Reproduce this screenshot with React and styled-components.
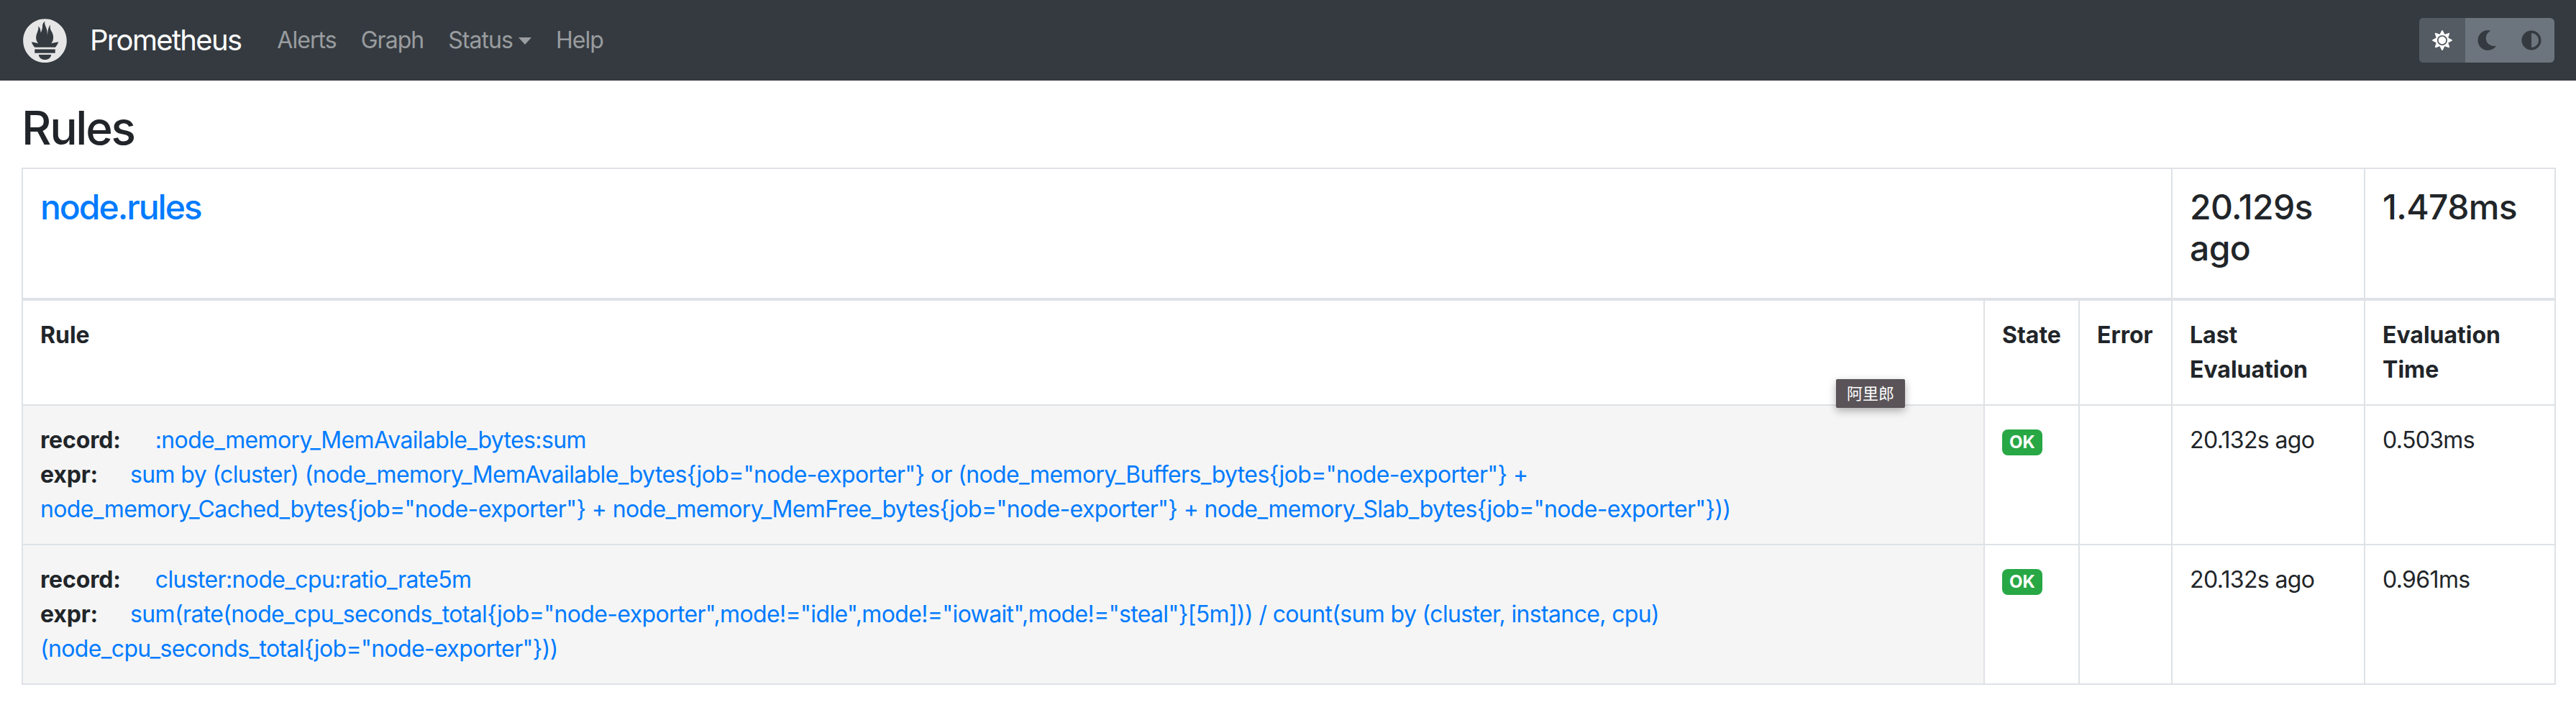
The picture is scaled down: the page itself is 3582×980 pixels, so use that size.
import React from 'react';
import styled, { createGlobalStyle } from 'styled-components';
import { FaSun, FaMoon, FaAdjust } from 'react-icons/fa';

const GlobalStyle = createGlobalStyle`
  html, body {
    margin: 0;
    background: #fff;
    color: #212529;
    font-family: Inter, "Noto Sans CJK SC", sans-serif;
    font-size: 32px;
    line-height: 1.5;
  }
`;

const Page = styled.div`
  position: relative;
  width: 3582px;
  min-height: 980px;
`;

const Navbar = styled.nav`
  display: flex;
  align-items: center;
  justify-content: space-between;
  height: 112px;
  padding: 0 30px 0 32px;
  box-sizing: border-box;
  background: #343a40;
`;

const NavLeft = styled.div`
  display: flex;
  align-items: center;
`;

const Logo = styled.svg`
  width: 61px;
  height: 61px;
  margin-right: 32px;
`;

const Brand = styled.a`
  color: #fff;
  font-size: 40px;
  letter-spacing: -0.042em;
  margin-right: 33px;
`;

const NavLink = styled.a`
  padding: 0 17px;
  color: rgba(255, 255, 255, 0.5);
  letter-spacing: -0.03em;
  white-space: nowrap;
`;

const Caret = styled.span`
  display: inline-block;
  margin-left: 8px;
  vertical-align: 5px;
  border-top: 10px solid;
  border-left: 9px solid transparent;
  border-right: 9px solid transparent;
`;

const ThemeToggle = styled.div`
  display: flex;
  height: 62px;
  border-radius: 6px;
  overflow: hidden;
  background: #6c757d;
`;

const ThemeButton = styled.div`
  display: flex;
  align-items: center;
  justify-content: center;
  width: ${p => p.$width}px;
  font-size: 28px;
  color: ${p => (p.$active ? '#fff' : '#343a40')};
  background: ${p => (p.$active ? '#545b62' : 'transparent')};
`;

const Content = styled.main`
  padding: 28px 30px 0;
`;

const Title = styled.h2`
  margin: 0 0 16px;
  font-size: 64px;
  font-weight: 500;
  letter-spacing: -0.036em;
  line-height: 1.2;
`;

const RulesTable = styled.table`
  width: 3522px;
  table-layout: fixed;
  border-collapse: collapse;
`;

const Cell = styled.td`
  padding: 24px;
  border: 2px solid #dee2e6;
  vertical-align: top;
  text-align: left;
  letter-spacing: -0.02em;
`;

const HeadCell = styled(Cell).attrs({ as: 'th' })`
  font-weight: 700;
  letter-spacing: normal;
  border-bottom: 2px solid #dee2e6;
`;

const GroupCell = styled(Cell)`
  border-bottom: 4px solid #dee2e6;
`;

const RuleCell = styled(Cell)`
  background: #f5f5f5;
`;

const GroupText = styled.h4`
  margin: 0 0 16px;
  font-size: 48px;
  font-weight: 500;
  line-height: 1.2;
`;

const RuleLink = styled.a`
  color: #007bff;
  text-decoration: none;
`;

const GroupLink = styled(RuleLink)`
  letter-spacing: -0.042em;
`;

const RuleLine = styled.div``;

const RuleLabel = styled.strong`
  margin-right: ${p => p.$gap}px;
  font-weight: 700;
  letter-spacing: -0.005em;
`;

const Badge = styled.span`
  display: inline-block;
  padding: 6px 10px;
  border-radius: 8px;
  background: #28a745;
  color: #fff;
  font-size: 24px;
  font-weight: 700;
  letter-spacing: normal;
  line-height: 1;
  vertical-align: baseline;
`;

const Tooltip = styled.div`
  position: absolute;
  left: 2553px;
  top: 527px;
  width: 96px;
  height: 40px;
  display: flex;
  align-items: center;
  justify-content: center;
  background: #5a5458;
  color: #fff;
  font-size: 22px;
  border-radius: 2px;
  box-shadow: 0 4px 12px rgba(0, 0, 0, 0.3);
`;

const rules = [
  {
    record: ':node_memory_MemAvailable_bytes:sum',
    expr: 'sum by (cluster) (node_memory_MemAvailable_bytes{job="node-exporter"} or (node_memory_Buffers_bytes{job="node-exporter"} + node_memory_Cached_bytes{job="node-exporter"} + node_memory_MemFree_bytes{job="node-exporter"} + node_memory_Slab_bytes{job="node-exporter"}))',
    last: '20.132s ago',
    time: '0.503ms',
  },
  {
    record: 'cluster:node_cpu:ratio_rate5m',
    expr: 'sum(rate(node_cpu_seconds_total{job="node-exporter",mode!="idle",mode!="iowait",mode!="steal"}[5m])) / count(sum by (cluster, instance, cpu) (node_cpu_seconds_total{job="node-exporter"}))',
    last: '20.132s ago',
    time: '0.961ms',
  },
];

const PrometheusLogo = () => (
  <Logo viewBox="0 0 115.333 115.333">
    <path
      fill="#e6e6e6"
      d="M57.667.667C26.002.667.333 26.336.333 58s25.669 57.333 57.334 57.333S115 89.664 115 58 89.331.667 57.667.667zm0 107.307c-9.009 0-16.312-6.018-16.312-13.44h32.623c0 7.422-7.303 13.44-16.311 13.44zM84.61 90.085H30.721v-9.77h53.89v9.77zm-.193-14.799H30.88c-.178-.205-.36-.407-.533-.616-5.516-6.698-6.815-10.195-8.076-13.76-.021-.117 6.689 1.371 11.447 2.442 0 0 2.448.567 6.027 1.219-3.436-4.028-5.477-9.149-5.477-14.383 0-11.49 8.812-21.531 5.633-29.647 3.094.252 6.404 6.531 6.627 16.348 3.289-4.545 4.666-12.847 4.666-17.936 0-5.27 3.472-11.391 6.945-11.6-3.096 5.102.802 9.476 4.267 20.334 1.3 4.078 1.134 10.941 2.138 15.293.333-9.039 1.887-22.228 7.621-26.781-2.53 5.735.374 12.91 2.361 16.36 3.206 5.568 5.15 9.787 5.15 17.767 0 5.351-1.976 10.389-5.309 14.327 3.79-.711 6.408-1.352 6.408-1.352l12.308-2.402c.001-.001-1.789 7.357-8.666 14.587z"
    />
  </Logo>
);

const App = () => (
  <Page>
    <GlobalStyle />
    <Navbar>
      <NavLeft>
        <PrometheusLogo />
        <Brand>Prometheus</Brand>
        <NavLink>Alerts</NavLink>
        <NavLink>Graph</NavLink>
        <NavLink>
          Status
          <Caret />
        </NavLink>
        <NavLink>Help</NavLink>
      </NavLeft>
      <ThemeToggle>
        <ThemeButton $active $width={64}>
          <FaSun />
        </ThemeButton>
        <ThemeButton $width={59}>
          <FaMoon />
        </ThemeButton>
        <ThemeButton $width={65}>
          <FaAdjust />
        </ThemeButton>
      </ThemeToggle>
    </Navbar>
    <Content>
      <Title>Rules</Title>
      <RulesTable>
        <colgroup>
          <col style={{ width: 2728 }} />
          <col style={{ width: 132 }} />
          <col style={{ width: 129 }} />
          <col style={{ width: 268 }} />
          <col style={{ width: 265 }} />
        </colgroup>
        <thead>
          <tr>
            <GroupCell colSpan={3}>
              <GroupText>
                <GroupLink>node.rules</GroupLink>
              </GroupText>
            </GroupCell>
            <GroupCell>
              <GroupText>20.129s ago</GroupText>
            </GroupCell>
            <GroupCell>
              <GroupText>1.478ms</GroupText>
            </GroupCell>
          </tr>
          <tr>
            <HeadCell>Rule</HeadCell>
            <HeadCell>State</HeadCell>
            <HeadCell>Error</HeadCell>
            <HeadCell>Last Evaluation</HeadCell>
            <HeadCell>Evaluation Time</HeadCell>
          </tr>
        </thead>
        <tbody>
          {rules.map(rule => (
            <tr key={rule.record}>
              <RuleCell>
                <RuleLine>
                  <RuleLabel $gap={48}>record:</RuleLabel>
                  <RuleLink>{rule.record}</RuleLink>
                </RuleLine>
                <RuleLine>
                  <RuleLabel $gap={45}>expr:</RuleLabel>
                  <RuleLink>{rule.expr}</RuleLink>
                </RuleLine>
              </RuleCell>
              <Cell>
                <Badge>OK</Badge>
              </Cell>
              <Cell />
              <Cell>{rule.last}</Cell>
              <Cell>{rule.time}</Cell>
            </tr>
          ))}
        </tbody>
      </RulesTable>
    </Content>
    <Tooltip>阿里郎</Tooltip>
  </Page>
);

export default App;
